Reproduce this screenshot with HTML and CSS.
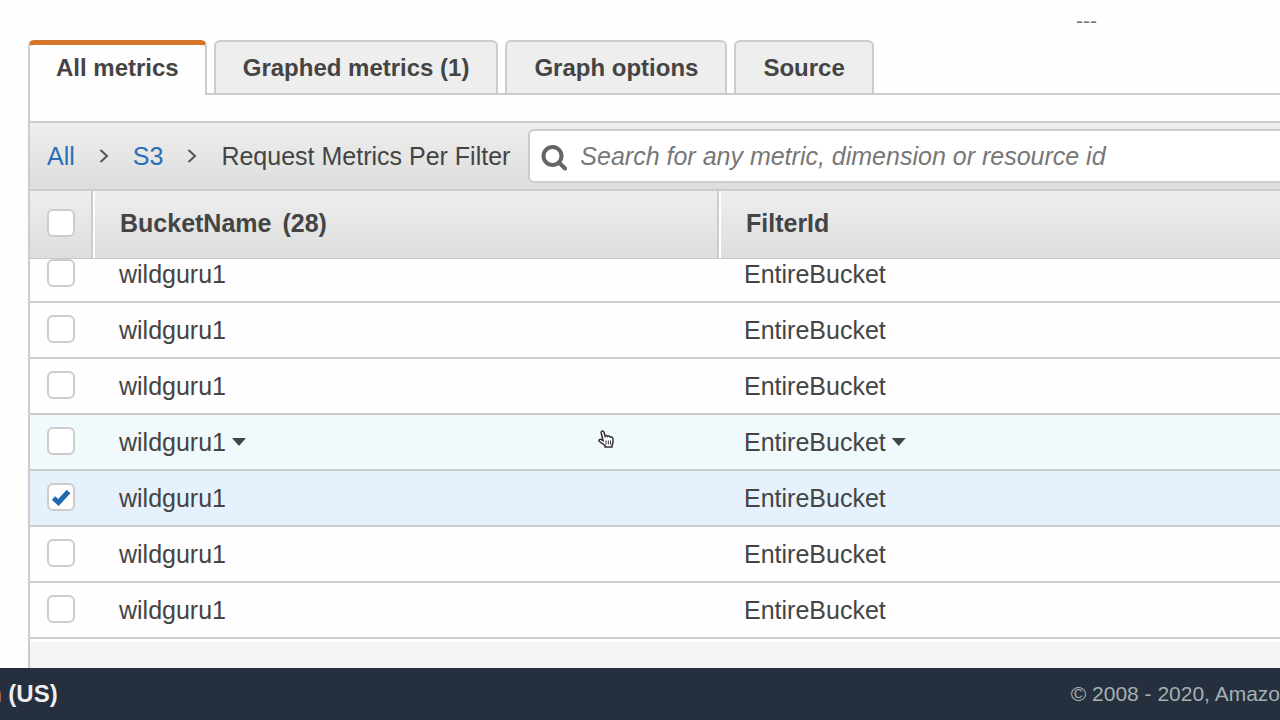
FILE: index.html
```html
<!DOCTYPE html>
<html lang="en">
<head>
<meta charset="utf-8">
<title>CloudWatch metrics</title>
<link rel="stylesheet" href="styles.css">
</head>
<body>
<main class="content">
  <div class="graph-legend">---</div>
  <div class="tabs" role="tablist">
    <button class="tab tab-active" type="button" role="tab" aria-selected="true">All metrics</button>
    <button class="tab" type="button" role="tab" aria-selected="false">Graphed metrics (1)</button>
    <button class="tab" type="button" role="tab" aria-selected="false">Graph options</button>
    <button class="tab" type="button" role="tab" aria-selected="false">Source</button>
  </div>
  <section class="panel">
    <div class="toolbar">
      <nav class="crumbs" aria-label="Breadcrumb">
        <a href="#">All</a>
        <svg class="chevron" viewBox="0 0 10 16" aria-hidden="true"><path d="M1.500 2L8 8l-6.500 6"/></svg>
        <a href="#">S3</a>
        <svg class="chevron" viewBox="0 0 10 16" aria-hidden="true"><path d="M1.500 2L8 8l-6.500 6"/></svg>
        <span>Request Metrics Per Filter</span>
      </nav>
      <label class="search">
        <svg class="search-icon" viewBox="0 0 26 32" aria-hidden="true"><circle cx="11.500" cy="16" r="9"/><path d="M18 22.500l6 6" stroke-linecap="round"/></svg>
        <input type="search" aria-label="Search metrics" placeholder="Search for any metric, dimension or resource id">
      </label>
    </div>
    <table class="metrics">
      <colgroup><col class="col-check"><col class="col-bucket"><col></colgroup>
      <thead>
        <tr>
          <th class="check-cell"><span class="check"><input type="checkbox" aria-label="Select all"></span></th>
          <th>BucketName <span class="count">(28)</span></th>
          <th>FilterId</th>
        </tr>
      </thead>
      <tbody>
        <tr class="row-scrolled"><td class="check-cell"><span class="check"><input type="checkbox" aria-label="Select metric 1"></span></td><td>wildguru1</td><td>EntireBucket</td></tr>
        <tr><td class="check-cell"><span class="check"><input type="checkbox" aria-label="Select metric 2"></span></td><td>wildguru1</td><td>EntireBucket</td></tr>
        <tr><td class="check-cell"><span class="check"><input type="checkbox" aria-label="Select metric 3"></span></td><td>wildguru1</td><td>EntireBucket</td></tr>
        <tr class="row-hover"><td class="check-cell"><span class="check"><input type="checkbox" aria-label="Select metric 4"></span></td><td>wildguru1<button class="caret" type="button" aria-label="Bucket options"></button></td><td>EntireBucket<button class="caret" type="button" aria-label="Filter options"></button></td></tr>
        <tr class="row-selected"><td class="check-cell"><span class="check"><input type="checkbox" aria-label="Select metric 5" checked><svg class="tick" viewBox="0 0 20 18" aria-hidden="true"><path d="M2.500 10l5 4.500L17.500 3.500"/></svg></span></td><td>wildguru1</td><td>EntireBucket</td></tr>
        <tr><td class="check-cell"><span class="check"><input type="checkbox" aria-label="Select metric 6"></span></td><td>wildguru1</td><td>EntireBucket</td></tr>
        <tr><td class="check-cell"><span class="check"><input type="checkbox" aria-label="Select metric 7"></span></td><td>wildguru1</td><td>EntireBucket</td></tr>
      </tbody>
    </table>
    <div class="panel-foot"></div>
  </section>
  <svg class="pointer" viewBox="0 0 16 18" aria-hidden="true"><path class="hand" d="M5 10.500L3.200 3Q3 1.200 4.200 1T6 2.300L7.200 6.300Q7.800 5.200 8.800 5.600L9.700 6.600Q10.600 5.600 11.600 6.200L12.300 7.200Q13.200 6.600 14 7.200T15 9V12Q15 13.800 14 15.200V17H7V15.500L1.500 11.500Q.600 10.300 1.500 9.500T3.600 9.800Z"/><path d="M8 10.500v4M10.300 10.500v4M12.500 10.500v4"/></svg>
</main>
<footer class="footer">
  <button class="language" type="button">English (US)</button>
  <span class="copyright">© 2008 - 2020, Amazo</span>
</footer>
</body>
</html>
```
FILE: styles.css
```css
* { box-sizing: border-box; }

body {
  margin: 0;
  min-height: 100vh;
  display: flex;
  flex-direction: column;
  overflow: hidden;
  background: #fefefe;
  color: #444;
  font: 25px/30px "Liberation Sans", Arial, sans-serif;
}

button, input { font: inherit; color: inherit; margin: 0; }
button { border: 0; padding: 0; background: none; }

.content {
  position: relative;
  flex: 1;
  display: flex;
  flex-direction: column;
  padding-left: 28px;
}

.graph-legend {
  height: 40px;
  padding: 9px 183px 0 0;
  text-align: right;
  font-size: 21px;
  line-height: 24px;
  color: #777;
}

.tabs { display: flex; gap: 7px; }

.tab {
  height: 53px;
  padding: 0 27px;
  border: 2px solid #ccc;
  border-bottom: 0;
  border-radius: 6px 6px 0 0;
  background: #eee;
  font-size: 24px;
  font-weight: bold;
  white-space: nowrap;
}

.tab-active {
  height: 55px;
  margin-bottom: -2px;
  padding: 0 26px 5px;
  border-top: 5px solid #d5762b;
  background: #fefefe;
  z-index: 1;
}

.panel {
  flex: 1;
  display: flex;
  flex-direction: column;
  border: solid #ccc;
  border-width: 2px 0 0 2px;
  padding-top: 26px;
}

.toolbar {
  display: flex;
  align-items: center;
  height: 70px;
  border: solid #ccc;
  border-width: 2px 0;
  background: linear-gradient(#eee, #ddd);
}

.crumbs {
  display: flex;
  align-items: center;
  gap: 24px;
  padding: 0 18px 0 17px;
  white-space: nowrap;
}

.crumbs a { color: #2870b8; text-decoration: none; }

.chevron { width: 10px; height: 16px; fill: none; stroke: #555; stroke-width: 2; }

.search {
  flex: 1;
  display: flex;
  align-items: center;
  gap: 13px;
  height: 54px;
  padding-left: 11px;
  border: solid #ccc;
  border-width: 2px 0 2px 2px;
  border-radius: 6px 0 0 6px;
  background: #fff;
}

.search-icon { flex: none; width: 26px; height: 32px; fill: none; stroke: #666; stroke-width: 4; }

.search input {
  flex: 1;
  min-width: 0;
  padding: 0;
  border: 0;
  outline: 0;
  background: none;
  font-style: italic;
}

.search input::placeholder { color: #777; opacity: 1; }

.metrics {
  width: 100%;
  table-layout: fixed;
  border-collapse: separate;
  border-spacing: 0;
}

.col-check { width: 61px; }
.col-bucket { width: 626px; }

th {
  height: 68px;
  padding: 0 28px 4px;
  border-bottom: 1px solid #ccc;
  background: linear-gradient(#eee, #ddd);
  text-align: left;
}

th + th { padding-left: 27px; border-left: 2px solid #ccc; box-shadow: inset 2px 0 #fff; }

.count { margin-left: 4px; }

td {
  height: 56px;
  padding: 0 28px 12px;
  border-bottom: 2px solid #ccc;
  vertical-align: bottom;
}

td + td + td { padding-left: 27px; }

.row-scrolled td { height: 43px; }
.row-hover td { background: #f0f9fc; }
.row-selected td { background: #e5f2fd; }

.metrics .check-cell { padding-left: 17px; padding-right: 0; }
td.check-cell { padding-bottom: 14px; }

.check { display: grid; width: 28px; place-items: center; }
.check > * { grid-area: 1 / 1; }

.check input {
  appearance: none;
  width: 28px;
  height: 28px;
  border: 2px solid #ccc;
  border-radius: 6px;
  background: #fff;
}

.tick { width: 20px; height: 18px; fill: none; stroke: #2268ac; stroke-width: 5; pointer-events: none; }

.caret {
  width: 14px;
  height: 8px;
  margin-left: 6px;
  background: #444;
  clip-path: polygon(0 0, 100% 0, 50% 100%);
  vertical-align: 5px;
}

.panel-foot { flex: 1; border-top: 3px solid #fefefe; background: #f5f4f5; }

.pointer {
  position: absolute;
  left: 598px;
  top: 430px;
  width: 16px;
  height: 18px;
  fill: none;
  stroke: #333;
  stroke-width: 1;
}

.hand { fill: #fff; stroke-width: 1.5; }

.footer {
  display: flex;
  justify-content: space-between;
  align-items: center;
  height: 52px;
  background: #252f3e;
  white-space: nowrap;
}

.language { margin-left: -85px; color: #eee; font-size: 24px; font-weight: bold; }

.copyright { color: #a5b0b2; font-size: 21px; }
```
